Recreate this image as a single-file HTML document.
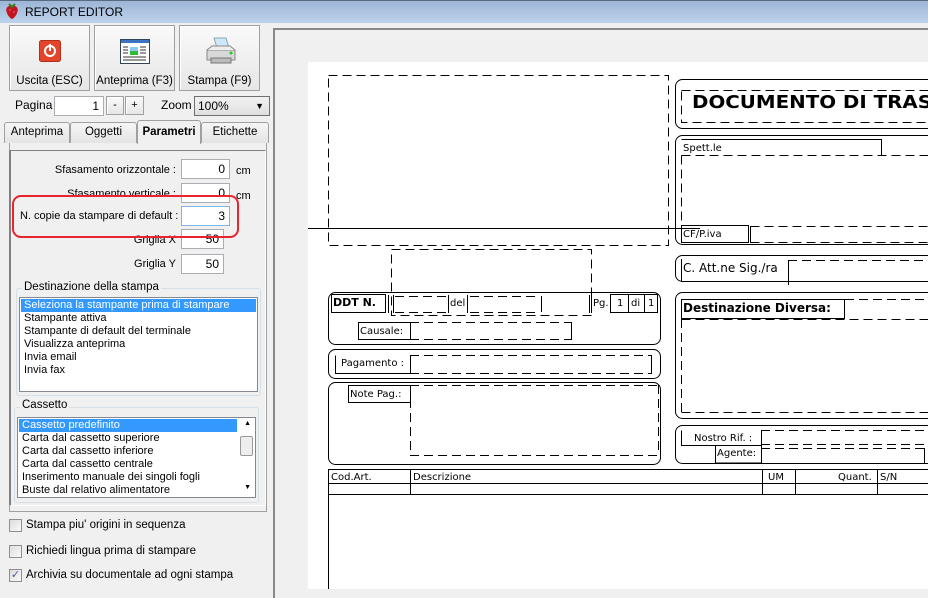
<!DOCTYPE html>
<html><head><meta charset="utf-8"><style>
*{margin:0;padding:0;box-sizing:border-box}
body{width:928px;height:589px;overflow:hidden;background:#f0f0f0;font-family:"Liberation Sans",sans-serif;font-size:11px;color:#000;position:relative}
.a{position:absolute;white-space:nowrap}
.title{left:0;top:0;width:928px;height:23px;background:linear-gradient(#9db5d6,#bdd3ec);border-top:1px solid #5a6a80}
.btn{top:25px;width:81px;height:66px;border:1px solid #a0a0a0;background:linear-gradient(#fafafa,#e6e6e6);box-shadow:inset 1px 1px #fff;text-align:center}
.btn span{position:absolute;left:0;right:0;top:49px;font-size:11.5px}
.inp{background:#fff;border:1px solid #abadb3;text-align:right;padding-right:4px;line-height:18px;height:20px;font-size:12px}
.tab{top:122px;height:21px;border:1px solid #a0a0a0;border-bottom:none;background:linear-gradient(#f6f6f6,#e4e4e4);text-align:center;line-height:19px;border-radius:3px 3px 0 0;font-size:11.5px}
.lbl{text-align:right}
.list{background:#fff;border:1px solid #828790;overflow:hidden}
.list div{height:13px;line-height:13px;padding-left:3px;font-size:11px;white-space:nowrap}
.sel{background:#3399ff;color:#fff}
.grp{border:1px solid #d5dfe5;border-radius:3px}
.gl{background:#f0f0f0;padding:0 2px}
.cb{width:13px;height:13px;border:1px solid #8f8f8f;background:linear-gradient(135deg,#dcdcdc,#fafafa)}
</style></head><body>
<div class="a title"></div>
<svg class="a" style="left:4px;top:3px" width="16" height="17" viewBox="0 0 16 17"><path d="M8 3C3 2 1 6 3 10c1 3 3 5 5 6 2-1 4-3 5-6 2-4 0-8-5-7z" fill="#c3141c"/><path d="M5 1l3 3 3-3" stroke="#3a7a20" stroke-width="2" fill="none"/><circle cx="6" cy="7" r=".7" fill="#f7c"/><circle cx="10" cy="9" r=".7" fill="#f7c"/></svg>
<div class="a" style="left:25px;top:5px;font-size:12px">REPORT EDITOR</div>

<div class="a btn" style="left:9px"><svg class="a" style="left:29px;top:14px" width="22" height="22"><rect x="0.5" y="0.5" width="21" height="21" rx="2" fill="#e2452a" stroke="#b0301a"/><circle cx="11" cy="11" r="5" fill="none" stroke="#fff" stroke-width="2"/><rect x="10" y="4" width="2" height="7" fill="#fff"/></svg><span>Uscita (ESC)</span></div>
<div class="a btn" style="left:94px"><svg class="a" style="left:25px;top:13px" width="30" height="25"><rect x="0.5" y="0.5" width="29" height="24" fill="#fff" stroke="#345"/><rect x="1" y="1" width="28" height="3" fill="#3b73c4"/><rect x="10" y="8" width="8" height="6" fill="#8cc8f0"/><rect x="10" y="12" width="8" height="4" fill="#2dbb3a"/><path d="M3 8h5M3 11h5M3 14h5M20 8h6M20 11h6M20 14h6M3 18h23M3 21h23" stroke="#333"/></svg><span>Anteprima (F3)</span></div>
<div class="a btn" style="left:179px"><svg class="a" style="left:25px;top:10px" width="32" height="30"><path d="M9 2l12 0 3 10H12z" fill="#cfe6fb" stroke="#8aa"/><path d="M2 14h28v10H2z" fill="#d8d8d8" stroke="#888"/><path d="M2 14l5-4h18l5 4" fill="#eee" stroke="#888"/><rect x="6" y="22" width="20" height="5" fill="#bbb" stroke="#777"/><circle cx="26" cy="17" r="1.5" fill="#2c2"/></svg><span>Stampa (F9)</span></div>

<div class="a" style="left:15px;top:98px;font-size:12px">Pagina</div>
<div class="a inp" style="left:54px;top:96px;width:50px">1</div>
<div class="a btn" style="left:106px;top:96px;width:18px;height:19px;text-align:center;line-height:17px">-</div>
<div class="a btn" style="left:125px;top:96px;width:19px;height:19px;text-align:center;line-height:17px">+</div>
<div class="a" style="left:161px;top:98px;font-size:12px">Zoom</div>
<div class="a inp" style="left:194px;top:96px;width:76px;text-align:left;padding-left:3px;border-color:#707070;background:linear-gradient(#f2f2f2,#e0e0e0)">100%<span style="position:absolute;right:5px;top:0;font-size:9px">▼</span></div>

<div class="a" style="left:9px;top:142px;width:258px;height:370px;border:1px solid #a0a0a0;background:#f0f0f0"></div>
<div class="a tab" style="left:4px;width:66px">Anteprima</div>
<div class="a tab" style="left:70px;width:67px">Oggetti</div>
<div class="a tab" style="left:137px;width:64px;top:120px;height:24px;background:#f0f0f0;font-weight:bold;line-height:22px">Parametri</div>
<div class="a tab" style="left:201px;width:68px">Etichette</div>
<div class="a" style="left:9px;top:150px;width:257px;height:356px;border-left:2px solid #808080;border-top:1px solid #808080;border-right:1px solid #fff;border-bottom:1px solid #fff"></div>

<div class="a lbl" style="left:20px;top:164px;width:156px">Sfasamento orizzontale :</div>
<div class="a inp" style="left:181px;top:159px;width:49px">0</div><div class="a" style="left:236px;top:165px">cm</div>
<div class="a lbl" style="left:20px;top:188px;width:156px">Sfasamento verticale :</div>
<div class="a inp" style="left:181px;top:183px;width:49px">0</div><div class="a" style="left:236px;top:190px">cm</div>
<div class="a lbl" style="left:20px;top:210px;width:158px">N. copie da stampare di default :</div>
<div class="a inp" style="left:181px;top:206px;width:49px;border-color:#7eb4ea">3</div>
<div class="a lbl" style="left:20px;top:234px;width:156px">Griglia X</div>
<div class="a inp" style="left:181px;top:229px;width:43px">50</div>
<div class="a lbl" style="left:20px;top:258px;width:156px">Griglia Y</div>
<div class="a inp" style="left:181px;top:254px;width:43px">50</div>
<div class="a" style="left:12px;top:195px;width:227px;height:43px;border:2.5px solid #e8242c;border-radius:9px"></div>

<div class="a grp" style="left:16px;top:288px;width:245px;height:108px"></div>
<div class="a gl" style="left:22px;top:281px;font-size:11.5px">Destinazione della stampa</div>
<div class="a list" style="left:19px;top:297px;width:239px;height:95px;padding:1px"><div class="sel">Seleziona la stampante prima di stampare</div><div>Stampante attiva</div><div>Stampante di default del terminale</div><div>Visualizza anteprima</div><div>Invia email</div><div>Invia fax</div></div>

<div class="a grp" style="left:14px;top:407px;width:245px;height:96px"></div>
<div class="a gl" style="left:20px;top:399px;font-size:11.5px">Cassetto</div>
<div class="a list" style="left:17px;top:417px;width:239px;height:81px;padding:1px"><div class="sel" style="margin-right:17px">Cassetto predefinito</div><div>Carta dal cassetto superiore</div><div>Carta dal cassetto inferiore</div><div>Carta dal cassetto centrale</div><div>Inserimento manuale dei singoli fogli</div><div>Buste dal relativo alimentatore</div>
<span class="a" style="right:2px;top:18px;width:13px;height:20px;border:1px solid #999;border-radius:2px;background:#eee"></span><span class="a" style="right:4px;top:2px;font-size:7px">▲</span><span class="a" style="right:4px;top:66px;font-size:7px">▼</span></div>

<div class="a cb" style="left:9px;top:519px"></div><div class="a" style="left:26px;top:519px;font-size:11.5px">Stampa piu' origini in sequenza</div>
<div class="a cb" style="left:9px;top:545px"></div><div class="a" style="left:26px;top:545px;font-size:11.5px">Richiedi lingua prima di stampare</div>
<div class="a cb" style="left:9px;top:569px;font-size:11px;line-height:11px;color:#4a5fa0;text-align:center">✓</div><div class="a" style="left:26px;top:569px;font-size:11.5px">Archivia su documentale ad ogni stampa</div>

<div class="a" style="left:273px;top:28px;width:660px;height:570px;border-left:2px solid #888;border-top:2px solid #888;background:#f0f0f0"></div>
<div class="a" style="left:308px;top:62px;width:620px;height:527px;background:#fff"></div>

<svg class="a" style="left:0;top:0" width="928" height="589" font-family="DejaVu Sans, sans-serif" font-size="10">
<g fill="none" stroke="#000" stroke-width="1">
<g stroke-dasharray="9,5">
<rect x="328.5" y="75.5" width="340" height="170"/>
<rect x="681.5" y="90.5" width="260" height="32"/>
<path d="M681.5 155.5H940M681.5 155.5V226M750.5 226.5H940M750.5 242.5H940"/>
<path d="M788 260.5H940M788 281.5H940"/>
<rect x="391.5" y="249.5" width="200" height="66"/>
<path d="M395 296.5H448M395 312.5H448M470 296.5H540M470 312.5H540"/>
<path d="M410 322.5H571M410 339.5H571"/>
<path d="M410 355.5H651M410 373.5H651"/>
<path d="M410 385.5H658M410 455.5H658M410.5 385V455M658.5 385V455"/>
<path d="M845 299.5H940M681.5 319.5H940M681.5 412.5H940M681.5 319V412"/>
<path d="M761 430.5H928M761 444.5H928M761 448.5H928M761 463.5H928"/>
</g>
<path d="M308 228.5H700"/>
<rect x="675.5" y="79.5" width="270" height="49" rx="7"/>
<rect x="675.5" y="135.5" width="270" height="109" rx="7"/>
<path d="M681.5 139.5H881.5V155"/>
<rect x="681.5" y="225.5" width="67" height="17"/>
<path d="M750.5 226V243"/>
<rect x="675.5" y="255.5" width="270" height="26" rx="7"/>
<path d="M681.5 259V281M788.5 260V285"/>
<rect x="328.5" y="292.5" width="332" height="52" rx="7"/>
<rect x="331.5" y="294.5" width="54" height="18"/>
<path d="M388.5 295V313M393.5 295V313M448.5 295V313M467.5 295V313M541.5 296V312M589.5 295V313M591.5 295V313"/>
<rect x="610.5" y="294.5" width="18" height="18"/><rect x="628.5" y="294.5" width="16" height="18"/><rect x="644.5" y="294.5" width="13" height="18"/>
<rect x="358.5" y="322.5" width="52" height="17"/><path d="M571.5 322V340"/>
<rect x="328.5" y="349.5" width="332" height="29" rx="7"/>
<path d="M335.5 355.5V373.5H410.5M410.5 355V374M651.5 355V374"/>
<rect x="328.5" y="382.5" width="332" height="82" rx="7"/>
<rect x="348.5" y="385.5" width="62" height="17"/>
<rect x="675.5" y="292.5" width="270" height="126" rx="7"/>
<rect x="681.5" y="299.5" width="163" height="19"/>
<rect x="675.5" y="425.5" width="270" height="38" rx="7"/>
<path d="M681.5 430.5V445.5H761.5M761.5 430V463M715.5 445V463H761.5M924.5 448V463"/>
<path d="M328.5 469.5H928M328.5 483.5H928M328.5 494.5H928M328.5 469V589M410.5 469V494M762.5 469V494M795.5 469V494M877.5 469V494"/>
</g>
<text x="692" y="108" font-size="18" font-weight="bold" textLength="240" lengthAdjust="spacingAndGlyphs">DOCUMENTO DI TRAS</text>
<text x="683" y="151">Spett.le</text>
<text x="683" y="237">CF/P.iva</text>
<text x="683" y="272" font-size="12">C. Att.ne Sig./ra</text>
<text x="333" y="306" font-weight="bold" font-size="11">DDT N.</text>
<text x="450" y="306">del</text>
<text x="593" y="306">Pg.</text>
<text x="617" y="306">1</text><text x="631" y="306">di</text><text x="648" y="306">1</text>
<text x="360" y="334">Causale:</text>
<text x="341" y="366">Pagamento :</text>
<text x="350" y="397">Note Pag.:</text>
<text x="683" y="312" font-size="12" font-weight="bold">Destinazione Diversa:</text>
<text x="694" y="441">Nostro Rif. :</text>
<text x="717" y="456">Agente:</text>
<text x="331" y="480">Cod.Art.</text>
<text x="413" y="480">Descrizione</text>
<text x="768" y="480">UM</text>
<text x="838" y="480">Quant.</text>
<text x="880" y="480">S/N</text>
</svg>
</body></html>
